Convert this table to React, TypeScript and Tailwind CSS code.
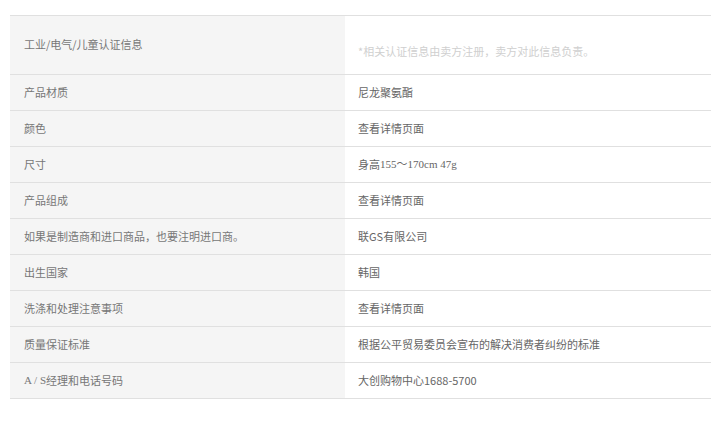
const serif = "font-['Liberation_Serif','Noto_Sans_CJK_SC',serif]";

const rows: { label: React.ReactNode; value: React.ReactNode }[] = [
  { label: "产品材质", value: "尼龙聚氨酯" },
  { label: "颜色", value: "查看详情页面" },
  {
    label: "尺寸",
    value: (
      <>
        身高<span className={serif}>155～170cm 47g</span>
      </>
    ),
  },
  { label: "产品组成", value: "查看详情页面" },
  { label: "如果是制造商和进口商品，也要注明进口商。", value: "联GS有限公司" },
  { label: "出生国家", value: "韩国" },
  { label: "洗涤和处理注意事项", value: "查看详情页面" },
  { label: "质量保证标准", value: "根据公平贸易委员会宣布的解决消费者纠纷的标准" },
  {
    label: (
      <>
        <span className={serif}>A / S</span>经理和电话号码
      </>
    ),
    value: "大创购物中心1688-5700",
  },
];

export default function App() {
  return (
    <div className="min-h-[433px] bg-white pt-[15px] font-['Noto_Sans_CJK_SC',sans-serif] text-[11px]">
      <div className="mx-[10px] w-[701px] border-t border-[#e0e0e0]">
        <div className="grid h-[59px] grid-cols-[335px_1fr] border-b border-[#e0e0e0]">
          <div className="flex items-center bg-[#f5f5f5] pl-[14px] pb-[2px] text-[#777]">
            工业/电气/儿童认证信息
          </div>
          <div className="pl-[13px] pt-[27px] text-[#cfcfcf]">
            *相关认证信息由卖方注册，卖方对此信息负责。
          </div>
        </div>
        {rows.map((r, i) => (
          <div key={i} className="grid h-9 grid-cols-[335px_1fr] border-b border-[#e0e0e0]">
            <div className="flex items-center bg-[#f5f5f5] pl-[14px] text-[#777]">{r.label}</div>
            <div className="flex items-center pl-[13px] text-[#666]">{r.value}</div>
          </div>
        ))}
      </div>
    </div>
  );
}
